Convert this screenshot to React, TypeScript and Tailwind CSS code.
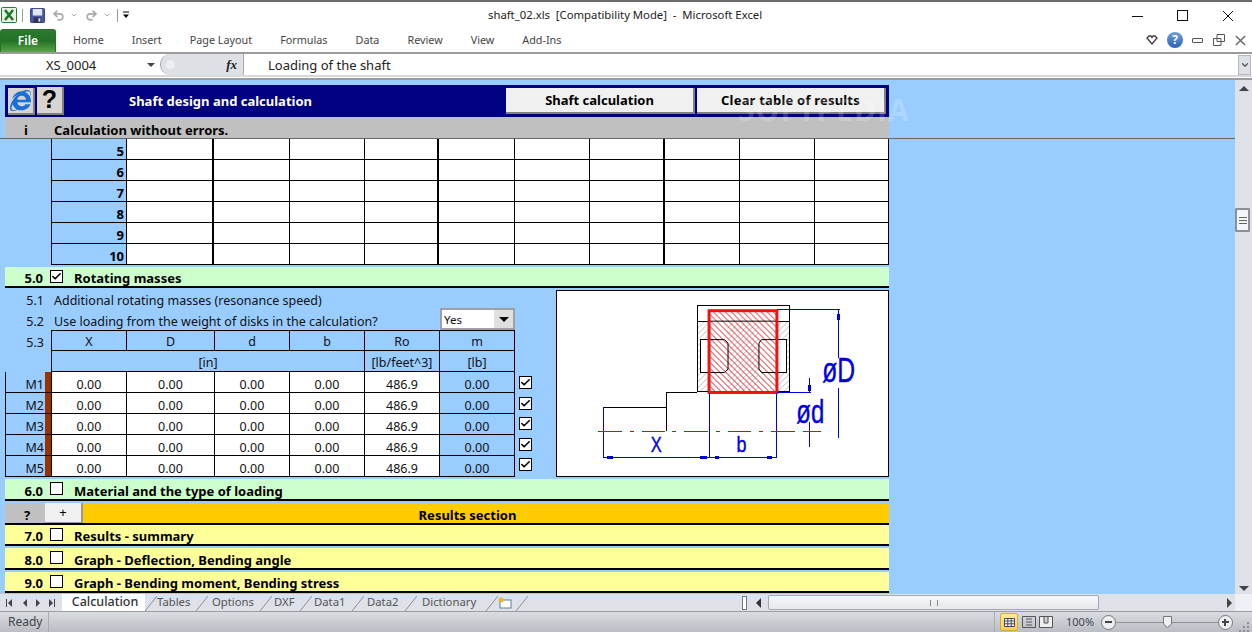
import { type ReactNode } from "react";
import { Check, ChevronDown, Redo2, Undo2 } from "lucide-react";
import { FaInternetExplorer } from "react-icons/fa";

const TABS = ["Home", "Insert", "Page Layout", "Formulas", "Data", "Review", "View", "Add-Ins"];
const SHEETS = [
  { name: "Tables", box: "w-[39px]" },
  { name: "Options", box: "w-[52px] pl-[4px]" },
  { name: "DXF", box: "w-[28px] pl-[2px]" },
  { name: "Data1", box: "w-[40px] pl-[2px]" },
  { name: "Data2", box: "w-[41px] pl-[3px]" },
  { name: "Dictionary", box: "w-[69px] pl-[5px]" },
];
const TOP_COLS = [
  "border-r-2",
  "border-r",
  "border-r",
  "border-r-2",
  "border-r",
  "border-r",
  "border-r-2",
  "border-r",
  "border-r",
  "border-r",
];
const MASSES = ["M1", "M2", "M3", "M4", "M5"];

function Box({ checked }: { checked?: boolean }) {
  return (
    <span className="flex h-[13px] w-[13px] items-center justify-center border border-black bg-white">
      {checked && <Check size={11} strokeWidth={3.5} className="text-black" />}
    </span>
  );
}

function Section({
  num,
  title,
  bg,
  h,
  checked,
}: {
  num: string;
  title: string;
  bg: string;
  h: string;
  checked?: boolean;
}) {
  return (
    <div className={`ml-[5px] flex w-[884px] border-b-2 border-black text-[13px] font-bold ${bg} ${h}`}>
      <span className="w-[38px] self-end text-right leading-[16px]">{num}</span>
      <span className="ml-[7px] mt-[3px]">
        <Box checked={checked} />
      </span>
      <span className="ml-[11px] self-end leading-[16px]">{title}</span>
    </div>
  );
}

function Drawing() {
  return (
    <svg viewBox="557 291 332 185" className="h-full w-full">
      <defs>
        <pattern id="red" width="6" height="6" patternUnits="userSpaceOnUse">
          <path d="M0 0L6 6M-3 3L3 9M3 -3L9 3" stroke="#e81818" strokeWidth="1" />
        </pattern>
        <pattern id="gray" width="6" height="6" patternUnits="userSpaceOnUse" patternTransform="rotate(90)">
          <path d="M0 0L6 6M-3 3L3 9M3 -3L9 3" stroke="#bcbcbc" strokeWidth="1" />
        </pattern>
      </defs>
      <rect x="697.5" y="321" width="93" height="71" fill="url(#gray)" />
      <g shapeRendering="crispEdges">
        <rect x="697.5" y="305.5" width="93" height="86.5" fill="none" stroke="#000" />
        <path d="M697.5 321H790.5M666.5 431V392.5H697.5M603.5 407.5H666.5" fill="none" stroke="#000" />
        <rect x="700.5" y="339.5" width="87" height="33" fill="#fff" stroke="#000" />
      </g>
      <rect x="710" y="310.5" width="67" height="81.5" fill="#fff" />
      <rect x="728" y="322" width="31" height="70" fill="url(#gray)" />
      <rect x="710" y="310.5" width="67" height="81.5" fill="url(#red)" />
      <path d="M710 339.5H725L728.5 343V369L725 372.5H710M777 339.5H762L759.5 343V369L762 372.5H777" fill="none" stroke="#000" />
      <path d="M710 321H777" stroke="#000" />
      <rect x="709.5" y="310.5" width="68" height="82" fill="none" stroke="#f41010" strokeWidth="3" />
      <g shapeRendering="crispEdges">
        <path
          d="M603.5 407V458M709.5 393V458M777.5 393V458M603 457.5H778M778 309.5H841M839.5 310V358M839.5 388V438M778 392.5H812M810.5 378V392M810.5 422V447M804 431.500H820"
          fill="none"
          stroke="#0000e0"
        />
        <path d="M598 431.500H622M630 431.500H634M642 431.500H665M672 431.500H676M684 431.500H708M716 431.500H720M728 431.500H752M760 431.500H764M772 431.500H796M804 431.500H822" stroke="#f00000" />
        <path
          d="M607 456h6v3h-6zM707 456h-7v3h7zM715 456h4v3h-4zM773 456h-5v3h5zM838 314h3v6h-3zM809 385h3v6h-3z"
          fill="#0000e0"
        />
      </g>
      <g fill="#0000e0" stroke="#0000e0" strokeWidth="0.4" fontFamily="'Liberation Sans', sans-serif">
        <text x="823" y="382" fontSize="35" textLength="33" lengthAdjust="spacingAndGlyphs">øD</text>
        <text x="797" y="423" fontSize="34" textLength="28" lengthAdjust="spacingAndGlyphs">ød</text>
        <text x="651" y="452" fontSize="22" textLength="11" lengthAdjust="spacingAndGlyphs">X</text>
        <text x="737" y="452" fontSize="23" textLength="10" lengthAdjust="spacingAndGlyphs">b</text>
      </g>
    </svg>
  );
}

function HeadCell({ children, className = "" }: { children?: ReactNode; className?: string }) {
  return (
    <div className={`flex items-end justify-center border-b border-r border-black leading-[16px] ${className}`}>
      {children}
    </div>
  );
}

function ValueCell({ children, className = "" }: { children?: ReactNode; className?: string }) {
  return (
    <div className={`flex items-end justify-center border-b border-r border-black leading-[14px] ${className}`}>
      {children}
    </div>
  );
}

function TitleBar() {
  return (
    <div className="relative flex h-[28px] shrink-0 items-center border-t-2 border-[#6d6d6d] bg-white">
      <svg viewBox="0 0 16 16" className="ml-[1px] h-[16px] w-[16px]">
        <rect x="0.5" y="0.5" width="15" height="15" rx="1" fill="#e6f2e6" stroke="#2a7a35" />
        <path d="M4 3L12 13M12 3L4 13" stroke="#1f7a2c" strokeWidth="2.6" />
      </svg>
      <span className="ml-[5px] h-[13px] w-px bg-[#9a9a9a]" />
      <svg viewBox="0 0 16 16" className="ml-[7px] h-[15px] w-[15px]">
        <rect x="0.5" y="0.5" width="15" height="15" rx="1" fill="#4a57a8" stroke="#2e3a80" />
        <rect x="3" y="1" width="10" height="7" fill="#dfe6f5" />
        <rect x="4" y="10" width="8" height="5.5" fill="#303650" />
        <rect x="9" y="11" width="2" height="3.5" fill="#dfe6f5" />
      </svg>
      <Undo2 size={13} strokeWidth={3} className="ml-[7px] text-[#a9a9a9]" />
      <ChevronDown size={8} strokeWidth={3} className="ml-[5px] text-[#a9a9a9]" />
      <Redo2 size={13} strokeWidth={3} className="ml-[7px] text-[#a9a9a9]" />
      <ChevronDown size={8} strokeWidth={3} className="ml-[5px] text-[#a9a9a9]" />
      <span className="ml-[6px] h-[13px] w-px bg-[#9a9a9a]" />
      <svg viewBox="0 0 8 8" className="ml-[4px] h-[8px] w-[8px]">
        <path d="M1 1H7" stroke="#000" />
        <path d="M1 3.5H7L4 7Z" fill="#000" />
      </svg>
      <span className="absolute left-[488px] top-[5px] text-[11.3px] leading-[16px] text-[#222]">
        shaft_02.xls&nbsp; [Compatibility Mode]&nbsp; -&nbsp; Microsoft Excel
      </span>
      <svg viewBox="0 0 102 12" className="absolute right-[18px] top-[8px] h-[12px] w-[102px]" fill="none" stroke="#111" shapeRendering="crispEdges">
        <path d="M0 6.5H11M45.5 0.5H55.5V10.5H45.5Z" />
        <path d="M91 1L101 11M101 1L91 11" shapeRendering="auto" />
      </svg>
    </div>
  );
}

function RibbonTabs() {
  return (
    <div className="relative flex h-[26px] shrink-0 items-end border-b-2 border-[#9c9c9c] bg-white">
      <div className="flex h-[23px] w-[56px] items-center justify-center rounded-t-[3px] border border-b-0 border-[#2c6e2c] bg-gradient-to-b from-[#2b7a2f] via-[#227326] to-[#5aa64a] text-[12px] font-semibold text-white">
        File
      </div>
      <div className="ml-[17px] flex h-[23px] items-center gap-[28px] text-[10.8px] text-[#444]">
        {TABS.map((t) => (
          <span key={t}>{t}</span>
        ))}
      </div>
      <div className="absolute right-0 top-0 flex h-[24px] items-center">
        <svg viewBox="0 0 12 10" className="h-[10px] w-[12px]" fill="none" stroke="#444" strokeWidth="1.4">
          <path d="M1 3L3 1H5L6 2.500L7 1H9L11 3L6 9Z" />
        </svg>
        <span className="ml-[9px] flex h-[16px] w-[16px] items-center justify-center rounded-full bg-gradient-to-b from-[#6f9fdc] to-[#2a62b5] text-[12px] font-bold text-white">
          ?
        </span>
        <span className="ml-[9px] h-[5px] w-[11px] rounded-[1px] border border-[#555]" />
        <svg viewBox="0 0 12 12" className="ml-[10px] h-[12px] w-[12px]" fill="#fff" stroke="#555">
          <path d="M4 .5H11.500V7.500H4ZM.5 4.500H8V11.500H.5Z" />
        </svg>
        <svg viewBox="0 0 12 12" className="ml-[10px] mr-[6px] h-[11px] w-[11px]" fill="none" stroke="#666" strokeWidth="1.6">
          <path d="M1 1L11 11M11 1L1 11" />
        </svg>
      </div>
    </div>
  );
}

function FormulaBar() {
  return (
    <>
      <div className="flex h-[21px] shrink-0 items-center bg-white text-[13px] text-[#222]">
        <div className="relative flex h-full w-[160px] items-center pl-[46px] pt-[2px]">
          XS_0004
          <span className="absolute right-[5px] top-[9px] h-0 w-0 border-x-[4px] border-t-[4px] border-x-transparent border-t-[#444]" />
        </div>
        <div className="flex h-full w-[84px] items-center justify-between rounded-l-[10px] border-l border-r border-[#a9a9a9] bg-[#dde0e5] pl-[5px] pr-[6px]">
          <span className="h-[9px] w-[9px] rounded-full bg-[#eceef1]" />
          <span className="font-['Liberation_Serif',serif] text-[13px] font-bold italic">fx</span>
        </div>
        <span className="ml-[24px] flex-1 pt-[2px]">Loading of the shaft</span>
        <div className="mr-[1px] flex h-[20px] w-[13px] items-center justify-center border border-[#b5b9bf] bg-[#dde0e5]">
          <ChevronDown size={10} strokeWidth={3} className="text-[#555]" />
        </div>
      </div>
      <div className="h-[5px] shrink-0 border-y-2 border-b-[#9c9c9c] border-t-[#d9d9d9] bg-white" />
    </>
  );
}

function Frozen() {
  return (
    <div className="relative shrink-0 border-b border-[#666] pl-[5px] pt-[5px]">
      <div className="flex h-[32px] w-[884px] items-center bg-[#000080] text-[13px] font-bold">
        <button className="ml-[3px] flex h-[27px] w-[27px] items-center justify-center border-b-2 border-r-2 border-[#808080] bg-[#d8d5d0]">
          <FaInternetExplorer size={21} className="text-[#1a6fd8]" />
        </button>
        <button className="ml-[2px] flex h-[28px] w-[27px] items-center justify-center border-b-2 border-r-2 border-[#808080] bg-[#d8d5d0] font-['Liberation_Sans',sans-serif] text-[25px] font-bold text-black">
          ?
        </button>
        <span className="ml-[65px] w-[377px] pt-[1px] text-white">Shaft design and calculation</span>
        <button className="h-[26px] w-[189px] border-b-2 border-r-2 border-[#808080] bg-[#f0f0f0] pt-[2px] text-black">
          Shaft calculation
        </button>
        <button className="ml-[2px] h-[26px] w-[189px] border-b-2 border-r-2 border-[#808080] bg-[#f0f0f0] pt-[2px] tracking-[0.2px] text-black">
          Clear table of results
        </button>
      </div>
      <div className="flex h-[21px] w-[884px] items-end bg-[#c0c0c0] text-[13px] font-bold leading-[16px]">
        <span className="ml-[19px] w-[30px]">i</span>
        <span>Calculation without errors.</span>
      </div>
      <span className="absolute left-[738px] top-[10px] font-['Open_Sans',sans-serif] text-[30px] font-bold leading-[40px] tracking-[1px] text-white/20">
        SOFTPEDIA
      </span>
    </div>
  );
}

function TopTable() {
  return (
    <div className="ml-[51px] grid w-[838px] grid-cols-[76px_87px_76px_75px_74px_76px_75px_75px_75px_75px_74px] auto-rows-[21px] text-[13px]">
      {[5, 6, 7, 8, 9, 10].map((n) =>
        [
          <div key={n} className="flex items-end justify-end border-b border-l border-r border-black bg-[#99ccff] pr-[2px] font-bold leading-[16px]">
            {n}
          </div>,
          ...TOP_COLS.map((c, i) => (
            <div key={`${n}-${i}`} className={`border-b border-black bg-white ${c}`} />
          )),
        ]
      )}
    </div>
  );
}

function MassesBlock() {
  return (
    <div className="ml-[5px] flex h-[191px] w-[884px] text-[12.5px] text-[#111]">
      <div className="grid w-[510px] grid-cols-[46px_76px_88px_75px_75px_75px_75px] auto-rows-[21px]">
        <span className="flex items-end justify-end pr-[7px] leading-[16px]">5.1</span>
        <span className="col-span-6 flex items-end pl-[3px] leading-[16px]">Additional rotating masses (resonance speed)</span>
        <span className="flex items-end justify-end pr-[7px] leading-[16px]">5.2</span>
        <span className="col-span-5 flex items-end whitespace-nowrap pl-[3px] leading-[16px]">Use loading from the weight of disks in the calculation?</span>
        <div className="-mt-[1px] flex h-[22px] items-center justify-between border-2 border-[#a0a0a0] bg-white pl-[2px] text-[11.5px]">
          <span className="pt-[1px]">Yes</span>
          <span className="flex h-full w-[19px] items-center justify-center bg-[#e0e0e0]">
            <span className="h-0 w-0 border-x-[5px] border-t-[5px] border-x-transparent border-t-black" />
          </span>
        </div>
        <span className="flex items-end justify-end pr-[7px] leading-[16px]">5.3</span>
        {["X", "D", "d", "b", "Ro", "m"].map((h, i) => (
          <HeadCell key={h} className={`border-t ${i === 0 ? "border-l" : ""}`}>{h}</HeadCell>
        ))}
        <span />
        <HeadCell className="col-span-4 border-l">[in]</HeadCell>
        <HeadCell>[lb/feet^3]</HeadCell>
        <HeadCell>[lb]</HeadCell>
        {MASSES.map((m) => [
          <div key={m} className="flex border border-t-0 border-r-0 border-black bg-[#99ccff]">
            <span className="flex-1 self-end pr-[1px] text-right leading-[14px]">{m}</span>
            <span className="w-[6px] bg-[#993300]" />
          </div>,
          <ValueCell key={`${m}x`} className="border-l bg-white">0.00</ValueCell>,
          <ValueCell key={`${m}d`} className="bg-white">0.00</ValueCell>,
          <ValueCell key={`${m}s`} className="bg-white">0.00</ValueCell>,
          <ValueCell key={`${m}b`} className="bg-white">0.00</ValueCell>,
          <ValueCell key={`${m}r`} className="bg-white">486.9</ValueCell>,
          <ValueCell key={`${m}m`}>0.00</ValueCell>,
        ])}
      </div>
      <div className="flex w-[41px] flex-col pl-[4px] pt-[88px]">
        {MASSES.map((m) => (
          <span key={m} className="flex h-[21px] items-start">
            <Box checked />
          </span>
        ))}
      </div>
      <div className="mt-[2px] h-[187px] w-[334px] border border-black bg-white">
        <Drawing />
      </div>
    </div>
  );
}

function ResultsBar() {
  return (
    <div className="ml-[5px] mt-[2px] flex h-[22px] w-[884px] border-b-2 border-black text-[13px] font-bold">
      <span className="flex w-[40px] items-end justify-center bg-[#c0c0c0] pl-[4px] leading-[16px]">?</span>
      <span className="flex w-[38px] items-center justify-center border-b border-r-2 border-[#999] bg-[#f0f0f0] font-normal">+</span>
      <span className="flex flex-1 items-end justify-center bg-[#ffcc00] pr-[37px] leading-[16px]">Results section</span>
    </div>
  );
}

function ScrollBar() {
  return (
    <div className="flex w-[17px] shrink-0 flex-col items-center bg-[#dee1e7] pt-[6px]">
      <span className="h-0 w-0 border-x-[5px] border-b-[5px] border-x-transparent border-b-[#444]" />
      <div className="mt-[117px] flex h-[24px] w-[15px] flex-col items-center justify-center gap-[2px] self-start rounded-[1px] border-2 border-[#8c8f94] bg-[#f4f5f7]">
        <span className="h-px w-[8px] bg-[#666]" />
        <span className="h-px w-[8px] bg-[#666]" />
        <span className="h-px w-[8px] bg-[#666]" />
      </div>
      <span className="mt-[354px] h-0 w-0 border-x-[5px] border-t-[5px] border-x-transparent border-t-[#444]" />
    </div>
  );
}

function Slant() {
  return (
    <svg viewBox="0 0 12 16" className="h-[16px] w-[12px] shrink-0" fill="none" stroke="#8b8f95">
      <path d="M0 16L12 1" />
    </svg>
  );
}

function SheetNav() {
  return (
    <svg viewBox="0 0 55 10" className="ml-[5px] h-[10px] w-[55px] shrink-0" fill="#444">
      <path d="M1 1h1v8H1zM7 1v8L3 5zM22 1v8L18 5zM31 1v8l4-4zM44 1v8l4-4zM49 1h1v8h-1z" />
    </svg>
  );
}

function SheetTabs() {
  return (
    <div className="flex h-[18px] shrink-0 items-center border-b border-[#9c9c9c] bg-[#dee1e7] text-[11.3px] text-[#555]">
      <SheetNav />
      <span className="ml-[2px] flex h-[17px] w-[83px] shrink-0 items-center justify-center bg-white pl-[3px] text-[12.5px] font-medium text-[#333]">Calculation</span>
      <Slant />
      {SHEETS.map((s) => (
        <div key={s.name} className="flex shrink-0 items-center">
          <span className={s.box}>{s.name}</span>
          <Slant />
        </div>
      ))}
      <svg viewBox="0 0 14 12" className="h-[12px] w-[14px] shrink-0">
        <rect x="2" y="3" width="11" height="8" fill="#fff" stroke="#5b7ea8" />
        <circle cx="3" cy="3" r="2.500" fill="#f0b030" />
      </svg>
      <span className="ml-[4px]"><Slant /></span>
      <span className="ml-[214px] h-[14px] w-[5px] shrink-0 border border-[#777] bg-white" />
      <span className="ml-[9px] h-0 w-0 shrink-0 border-y-[5px] border-r-[5px] border-y-transparent border-r-[#333]" />
      <div className="ml-[7px] flex h-[15px] w-[331px] shrink-0 items-center justify-center rounded-[2px] border border-[#a5a8ad] bg-gradient-to-b from-[#f6f7f9] to-[#e6e8ec]">
        <span className="h-[6px] w-[8px] border-x border-[#888]" />
      </div>
      <span className="ml-[128px] h-0 w-0 shrink-0 border-y-[5px] border-l-[5px] border-y-transparent border-l-[#444]" />
      <div className="ml-auto h-full w-[17px] shrink-0 bg-[#eef0f3]" />
    </div>
  );
}

function StatusBar() {
  return (
    <div className="flex min-h-0 flex-1 items-center bg-gradient-to-b from-[#d9dce1] to-[#babec4] text-[12px] text-[#444]">
      <span className="ml-[8px] w-[40px] pb-[1px]">Ready</span>
      <span className="h-full w-px bg-[#a9acb1]" />
      <span className="ml-[945px] h-full w-px bg-[#a9acb1]" />
      <div className="ml-[5px] flex h-[18px] w-[18px] items-center justify-center rounded-[2px] border border-[#d8a838] bg-gradient-to-b from-[#fdeaa0] to-[#f9cf5c]">
        <svg viewBox="0 0 11 9" className="h-[9px] w-[11px]" fill="#fff" stroke="#445">
          <path d="M.5 .5H10.500V8.500H.5ZM.5 3H10.500M.5 5.800H10.500M3.800 .5V8.500M7.200 .5V8.500" />
        </svg>
      </div>
      <svg viewBox="0 0 14 12" className="ml-[4px] h-[12px] w-[14px]" fill="none" stroke="#555">
        <path d="M.5 .5H13.500V11.500H.5ZM4 3H10M4 6H10M4 9H10" />
      </svg>
      <svg viewBox="0 0 14 12" className="ml-[3px] h-[12px] w-[14px]" fill="#eee" stroke="#555">
        <path d="M.5 .5H13.500V11.500H.5ZM5 .5V7H9V.5" />
      </svg>
      <span className="ml-[13px] w-[35px] text-[11px] text-[#445]">100%</span>
      <span className="flex h-[15px] w-[15px] items-center justify-center rounded-full border border-[#777] bg-[#eceef1]">
        <span className="h-[2px] w-[7px] bg-[#444]" />
      </span>
      <div className="relative h-px w-[102px] bg-[#8d9096]">
        <svg viewBox="0 0 9 12" className="absolute left-[47px] -top-[6px] h-[12px] w-[9px]" fill="#eef0f2" stroke="#777">
          <path d="M.5 .5H8.500V8L4.500 11.500L.5 8Z" />
        </svg>
      </div>
      <span className="relative flex h-[15px] w-[15px] items-center justify-center rounded-full border border-[#777] bg-[#eceef1]">
        <span className="h-[2px] w-[7px] bg-[#444]" />
        <span className="absolute left-[5px] top-[3px] h-[7px] w-[2px] bg-[#444]" />
      </span>
      <svg viewBox="0 0 12 12" className="ml-[6px] mt-[8px] h-[12px] w-[12px]" fill="#8d9096">
        <path d="M8 2h2v2H8zM4 6h2v2H4zM8 6h2v2H8zM0 10h2v2H0zM4 10h2v2H4zM8 10h2v2H8z" />
      </svg>
    </div>
  );
}

export default function App() {
  return (
    <div className="flex h-[632px] w-[1252px] flex-col overflow-hidden bg-white font-['Noto_Sans',sans-serif] text-black">
      <TitleBar />
      <RibbonTabs />
      <FormulaBar />
      <div className="flex h-[514px] shrink-0">
        <div className="min-w-0 flex-1 overflow-hidden bg-[#99ccff]">
          <Frozen />
          <TopTable />
          <div className="h-[2px]" />
          <Section num="5.0" title="Rotating masses" bg="bg-[#ccffcc]" h="h-[21px]" checked />
          <MassesBlock />
          <Section num="6.0" title="Material and the type of loading" bg="bg-[#ccffcc]" h="h-[22px]" />
          <ResultsBar />
          <Section num="7.0" title="Results - summary" bg="bg-[#ffff99]" h="h-[21px]" />
          <div className="h-[2px]" />
          <Section num="8.0" title="Graph - Deflection, Bending angle" bg="bg-[#ffff99]" h="h-[22px]" />
          <div className="h-[2px]" />
          <Section num="9.0" title="Graph - Bending moment, Bending stress" bg="bg-[#ffff99]" h="h-[21px]" />
        </div>
        <ScrollBar />
      </div>
      <SheetTabs />
      <StatusBar />
    </div>
  );
}
